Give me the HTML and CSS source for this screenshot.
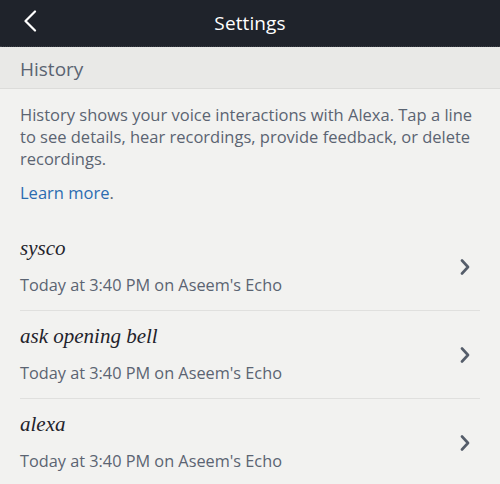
FILE: index.html
```html
<!DOCTYPE html>
<html>
<head>
<meta charset="utf-8">
<link rel="stylesheet" href="styles.css">
</head>
<body>
<div class="topbar">
  <svg class="back" width="14" height="22" viewBox="0 0 14 22"><path d="M12 1.5 L2.5 11 L12 20.5" fill="none" stroke="#fff" stroke-width="2.2" stroke-linecap="round" stroke-linejoin="round"/></svg>
  <div class="title">Settings</div>
</div>
<div class="section">History</div>
<div class="desc">
  <p class="text">History shows your voice interactions with Alexa. Tap a line to see details, hear recordings, provide feedback, or delete recordings.</p>
  <p class="learn"><span class="link">Learn more</span>.</p>
</div>
<div class="list">
  <div class="row">
    <div class="info">
      <div class="utter">sysco</div>
      <div class="meta">Today at 3:40 PM on Aseem's Echo</div>
    </div>
    <svg class="chev" width="10" height="16" viewBox="0 0 10 16"><path d="M2 1.5 L8 8 L2 14.5" fill="none" stroke="#555d6a" stroke-width="2.6" stroke-linecap="round" stroke-linejoin="round"/></svg>
  </div>
  <div class="row">
    <div class="info">
      <div class="utter">ask opening bell</div>
      <div class="meta">Today at 3:40 PM on Aseem's Echo</div>
    </div>
    <svg class="chev" width="10" height="16" viewBox="0 0 10 16"><path d="M2 1.5 L8 8 L2 14.5" fill="none" stroke="#555d6a" stroke-width="2.6" stroke-linecap="round" stroke-linejoin="round"/></svg>
  </div>
  <div class="row">
    <div class="info">
      <div class="utter">alexa</div>
      <div class="meta">Today at 3:40 PM on Aseem's Echo</div>
    </div>
    <svg class="chev" width="10" height="16" viewBox="0 0 10 16"><path d="M2 1.5 L8 8 L2 14.5" fill="none" stroke="#555d6a" stroke-width="2.6" stroke-linecap="round" stroke-linejoin="round"/></svg>
  </div>
</div>
</body>
</html>
```
FILE: styles.css
```css
html, body {
  margin: 0;
  padding: 0;
  background: #f2f2f0;
  font-family: "Open Sans", "Noto Sans", sans-serif;
  width: 500px;
  height: 484px;
  overflow: hidden;
}
.topbar {
  height: 46px;
  background: #1f232b;
  border-bottom: 1px dotted #3a3e46;
  display: flex;
  align-items: center;
  justify-content: center;
  position: relative;
}
.back {
  position: absolute;
  left: 23px;
  top: 10px;
}
.title {
  color: #ffffff;
  font-size: 19px;
  letter-spacing: 0.1px;
}
.section {
  height: 42px;
  box-sizing: border-box;
  background: #e9e9e7;
  border-bottom: 1px solid #dcdcda;
  padding-left: 20px;
  padding-top: 2px;
  display: flex;
  align-items: center;
  font-size: 19px;
  color: #5b6472;
}
.desc {
  padding: 15px 20px 0 20px;
}
.text {
  margin: 0;
  font-size: 16.5px;
  line-height: 22px;
  color: #5b6472;
}
.learn {
  margin: 12px 0 0 0;
  font-size: 16.5px;
  line-height: 22px;
  color: #5b6472;
}
.link {
  color: #2b6cb0;
}
.list {
  margin-top: 19px;
  padding: 0 20px;
}
.row {
  height: 88px;
  box-sizing: border-box;
  border-bottom: 1px solid #e0e0de;
  display: flex;
  align-items: center;
}
.info {
  flex: 1;
  display: flex;
  flex-direction: column;
  gap: 14px;
  padding-bottom: 2px;
}
.utter {
  font-family: "Liberation Serif", serif;
  font-style: italic;
  font-size: 21px;
  line-height: 24px;
  color: #1f232b;
}
.meta {
  font-size: 16.3px;
  line-height: 22px;
  color: #5b6472;
}
.chev {
  margin-right: 10px;
}
```
